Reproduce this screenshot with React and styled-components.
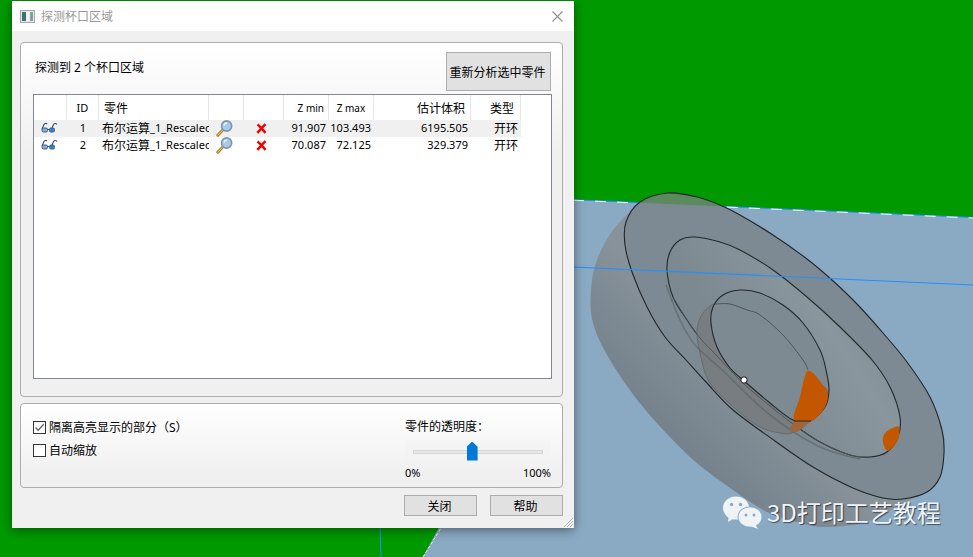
import React from "react";
import styled, { createGlobalStyle } from "styled-components";

const uiFont = `"Noto Sans", "Noto Sans CJK SC", sans-serif`;

const GlobalStyle = createGlobalStyle`
  html, body {
    margin: 0;
    padding: 0;
    overflow: hidden;
    background: #009900;
  }
`;

const Desktop = styled.div`
  position: relative;
  width: 973px;
  height: 557px;
  overflow: hidden;
  background: #009900;
  font-family: ${uiFont};
  font-size: 12px;
  color: #000;
`;

const Scene = styled.svg`
  position: absolute;
  inset: 0;
`;

const Dialog = styled.div`
  position: absolute;
  left: 12px;
  top: 1px;
  width: 562px;
  height: 527px;
  display: flex;
  flex-direction: column;
  background: #f0f0f0;
  box-shadow: 0 2px 10px rgba(0, 0, 0, 0.45);
`;

const TitleBar = styled.div`
  height: 30px;
  flex: none;
  display: flex;
  align-items: center;
  gap: 6px;
  padding: 0 11px 0 8px;
  background: #fff;
`;

const TitleText = styled.span`
  flex: 1;
  color: #999;
  font-size: 12px;
`;

const Body = styled.div`
  flex: 1;
  display: flex;
  flex-direction: column;
  padding: 11px 11px 12px 8px;
`;

const Group = styled.section`
  box-sizing: border-box;
  height: ${(p) => p.$height}px;
  flex: none;
  border: 1px solid #adadad;
  border-radius: 4px;
  background: linear-gradient(#fff, #f0f0f0 ${(p) => p.$fade}px);
`;

const DetectGroup = styled(Group)`
  display: flex;
  flex-direction: column;
  padding: 9px 11px 17px 12px;
`;

const OptionsGroup = styled(Group)`
  margin-top: 6px;
  display: flex;
  justify-content: space-between;
  padding: 14px 11px 0 12px;
`;

const TopRow = styled.div`
  display: flex;
  justify-content: space-between;
  align-items: flex-start;
  margin-bottom: 3px;
`;

const CountText = styled.span`
  margin: 7px 0 0 2px;
  line-height: 18px;
`;

const Button = styled.button`
  box-sizing: border-box;
  width: ${(p) => p.$width}px;
  height: ${(p) => p.$height}px;
  padding: 0 ${(p) => p.$nudge || 0}px 0 0;
  border: 1px solid #adadad;
  background: #e1e1e1;
  font-family: ${uiFont};
  font-size: 12px;
  color: #000;
`;

const Table = styled.div`
  flex: 1;
  box-sizing: border-box;
  margin-right: -1px;
  border: 1px solid #828790;
  background: #fff;
`;

const Row = styled.div`
  display: grid;
  grid-template-columns: 33px 32px 110px 35px 40px 45px 45px 97px 50px;
  width: 487px;
  height: ${(p) => p.$height}px;
  background: ${(p) => (p.$shaded ? "#f0f0f0" : "#fff")};
`;

const HeadCell = styled.div`
  display: flex;
  align-items: center;
  justify-content: ${(p) => p.$justify || "center"};
  padding: ${(p) => p.$padding || "0"};
  border-right: 1px solid #e5e5e5;
  font-size: ${(p) => p.$size || 12}px;
`;

const Cell = styled.div`
  display: flex;
  align-items: center;
  justify-content: ${(p) => p.$justify || "center"};
  padding: ${(p) => p.$padding || "0"};
  overflow: hidden;
  white-space: nowrap;
  font-size: ${(p) => (p.$small ? "11px" : "12px")};
`;

const GlassesCell = styled(Cell)`
  padding: 0 3px 2px 0;
`;

const LatinPart = styled.span`
  font-size: 11px;
`;

const CheckList = styled.div`
  display: flex;
  flex-direction: column;
  gap: 5px;
`;

const CheckRow = styled.label`
  display: flex;
  align-items: center;
  gap: 3px;
  height: 18px;
`;

const Box = styled.span`
  box-sizing: border-box;
  width: 13px;
  height: 13px;
  border: 1px solid #333;
  background: #fff;
  display: flex;
  align-items: center;
  justify-content: center;
`;

const SliderPanel = styled.div`
  width: 146px;
  display: flex;
  flex-direction: column;
  margin-top: -1px;
`;

const SliderArea = styled.div`
  height: 23px;
  margin-top: 5px;
  display: flex;
  align-items: center;
  padding: 0 8px;
  background: rgba(240, 240, 240, 0.35);
`;

const Track = styled.div`
  position: relative;
  flex: 1;
  box-sizing: border-box;
  height: 4px;
  border: 1px solid #d6d6d6;
  background: #e7e7e7;
`;

const Thumb = styled.div`
  position: absolute;
  top: -9px;
  width: 11px;
  height: 19px;
  margin-left: -5px;
  background: #0078d7;
  clip-path: polygon(50% 0, 100% 27%, 100% 100%, 0 100%, 0 27%);
`;

const PercentRow = styled.div`
  display: flex;
  justify-content: space-between;
  margin-top: 2px;
  font-size: 11px;
`;

const Footer = styled.div`
  margin-top: 7px;
  display: flex;
  justify-content: flex-end;
  gap: 13px;
`;

const Grip = styled.svg`
  position: absolute;
  right: 0;
  bottom: 0;
`;

const Watermark = styled.div`
  position: absolute;
  left: 722px;
  top: 495px;
  display: flex;
  align-items: center;
  gap: 4px;
  color: #f0f4f8;
  font-family: "Noto Sans CJK SC", "Noto Sans", sans-serif;
  font-size: 24px;
  line-height: 34px;
  text-shadow: 1px 1px 1px rgba(0, 0, 0, 0.55);
`;

// catmull-rom through the traced points, closed or open
const smooth = (pts, closed = true) => {
  const n = pts.length;
  const at = (i) => (closed ? pts[(i + n) % n] : pts[Math.max(0, Math.min(n - 1, i))]);
  let d = `M${pts[0][0]} ${pts[0][1]}`;
  const last = closed ? n : n - 1;
  for (let i = 0; i < last; i++) {
    const [p0, p1, p2, p3] = [at(i - 1), at(i), at(i + 1), at(i + 2)];
    const c1 = [p1[0] + (p2[0] - p0[0]) / 6, p1[1] + (p2[1] - p0[1]) / 6];
    const c2 = [p2[0] - (p3[0] - p1[0]) / 6, p2[1] - (p3[1] - p1[1]) / 6];
    d += `C${c1[0]} ${c1[1]} ${c2[0]} ${c2[1]} ${p2[0]} ${p2[1]}`;
  }
  return closed ? d + "Z" : d;
};

const underside = [[640,202],[613,230],[597,260],[591,290],[593,323],[610,360],[643,407],[690,457],[733,490],[767,512],[800,523],[827,527],[867,522],[900,505],[927,492]];
const rim = [[668,193],[640,202],[626,222],[625,245],[632,272],[647,307],[665,337],[686,360],[706,382],[733,410],[775,441],[813,467],[853,488],[883,498],[903,499],[927,492],[940,477],[944,453],[942,430],[930,397],[907,362],[883,333],[857,304],[832,280],[807,259],[773,235],[740,215],[720,205],[697,197]];
const middle = [[695,237],[680,240],[670,252],[667,270],[673,297],[687,320],[700,338],[717,356],[743,383],[770,406],[793,424],[820,442],[850,455],[870,457],[887,452],[898,437],[900,417],[890,387],[872,360],[840,327],[807,297],[773,270],[740,250],[720,242]];
const middleFront = [[673,297],[687,320],[700,338],[717,356],[743,383],[770,406],[793,424],[820,442],[850,455],[870,457]];
const middleEcho = [[666,285],[680,320],[695,345],[720,368],[770,415],[820,447],[860,459]];
const inner = [[740,290],[723,295],[713,307],[711,323],[717,347],[730,368],[743,380],[770,403],[793,420],[810,421],[825,407],[829,390],[826,370],[820,350],[803,323],[783,305],[760,293]];
const hollow = [[715,304],[703,313],[697,330],[700,353],[710,383],[737,410],[760,427],[780,433],[792,433],[805,425],[793,420],[770,403],[743,380],[730,368],[717,347],[711,323]];
const lip = [[715,304],[730,304],[747,310],[760,315],[783,335],[803,360],[808,370]];
const spotLarge = [[808,371],[823,385],[828,393],[825,407],[812,421],[794,420],[800,397]];
const spotSmall = [[895,427],[899,428],[898,440],[888,451],[883,442],[885,433]];

const CupScene = () => (
  <Scene width="973" height="557" viewBox="0 0 973 557">
    <defs>
      <linearGradient id="dish" gradientUnits="userSpaceOnUse" x1="640" y1="450" x2="730" y2="360">
        <stop offset="0" stopColor="#6f7c87" />
        <stop offset="1" stopColor="#87929a" />
      </linearGradient>
      <linearGradient id="seat" gradientUnits="userSpaceOnUse" x1="740" y1="360" x2="880" y2="270">
        <stop offset="0" stopColor="#7c8991" />
        <stop offset="0.55" stopColor="#8a969d" />
        <stop offset="1" stopColor="#7d8a92" />
      </linearGradient>
      <clipPath id="aboveEdge">
        <polygon points="573,0 973,0 973,217.5 573,199.7" />
      </clipPath>
    </defs>
    <polygon points="573,199.7 973,217.5 973,557 423,557 573,280" fill="#8aaac4" />
    <line x1="573" y1="199.7" x2="973" y2="217.5" stroke="#1e90ff" strokeWidth="1" />
    <line x1="573" y1="200.2" x2="973" y2="218" stroke="#fff" strokeWidth="1" strokeDasharray="11 11" />
    <line x1="423" y1="557" x2="441" y2="528" stroke="#fff" strokeWidth="1" strokeDasharray="3 2" />
    <line x1="380" y1="528" x2="381" y2="557" stroke="#1e90ff" strokeWidth="1" />
    <path d={smooth(underside, false) + "Z"} fill="url(#dish)" />
    <path d={smooth(rim)} fill="#7d8a93" />
    <path d={smooth(rim)} fill="#5b8a5f" clipPath="url(#aboveEdge)" />
    <path d={smooth(rim)} fill="none" stroke="#20262a" strokeWidth="1.1" />
    <path d={smooth(middle)} fill="url(#seat)" stroke="#23292d" strokeWidth="1.1" />
    <path d={smooth(hollow)} fill="#777d81" stroke="#666c70" strokeWidth="1" />
    <path d={smooth(inner)} fill="#7d8a92" stroke="#23292d" strokeWidth="1.1" />
    <path d={smooth(lip, false)} fill="none" stroke="#4b5357" strokeWidth="1" />
    <path d={smooth(middleFront, false)} fill="none" stroke="#4f575c" strokeWidth="1" />
    <path d={smooth(middleEcho, false)} fill="none" stroke="#5e666c" strokeWidth="1.6" strokeOpacity="0.7" />
    <path d={smooth(spotLarge)} fill="#c25700" />
    <polygon points="794,421 811,421 803,428 795,433 790,430" fill="#a0653a" />
    <line x1="794" y1="421" x2="811" y2="421" stroke="#23292d" strokeWidth="1" />
    <path d={smooth(spotSmall)} fill="#c25700" />
    <line x1="573" y1="267" x2="973" y2="285" stroke="#1e90ff" strokeWidth="1.1" />
    <circle cx="744" cy="380" r="3.2" fill="#fff" stroke="#111" strokeWidth="1" />
  </Scene>
);

const WindowIcon = () => (
  <svg width="15" height="13" viewBox="0 0 15 13">
    <rect x="0.5" y="0.5" width="14" height="12" fill="#e4e8e8" stroke="#a8a8a8" />
    <rect x="2" y="2" width="4" height="9" fill="#3f6f6f" />
    <rect x="6" y="2" width="4" height="9" fill="#eef2f2" />
    <rect x="10" y="2" width="3" height="5" fill="#6fae8f" />
    <rect x="10" y="7" width="3" height="4" fill="#8a98a8" />
  </svg>
);

const CloseIcon = () => (
  <svg width="11" height="11" viewBox="0 0 11 11">
    <path d="M0.5 0.5L10.5 10.5M10.5 0.5L0.5 10.5" stroke="#8f8f8f" strokeWidth="1.1" fill="none" />
  </svg>
);

const GlassesIcon = () => (
  <svg width="17" height="11" viewBox="0 0 17 11">
    <path d="M1 7L3 2.5C3.5 1.4 5 1 6 2M11 6L12.5 2.5C13 1.2 15 1 16 2.4" stroke="#3b4a5c" strokeWidth="1.1" fill="none" />
    <rect x="1" y="6" width="5.5" height="4" rx="1.5" fill="#7fb0e0" stroke="#35506e" strokeWidth="0.9" />
    <rect x="8.5" y="6" width="5" height="4" rx="1.5" fill="#2f86e0" stroke="#35506e" strokeWidth="0.9" />
    <path d="M6.5 7.5L8.5 7.5" stroke="#35506e" strokeWidth="1" />
  </svg>
);

const LensIcon = () => (
  <svg width="17" height="17" viewBox="0 0 17 17">
    <path d="M1.8 15.2L7 9.8" stroke="#b08030" strokeWidth="3" strokeLinecap="round" />
    <path d="M1.8 15.2L7 9.8" stroke="#ecca85" strokeWidth="1" strokeLinecap="round" />
    <circle cx="10.6" cy="6" r="5.1" fill="#a9c9e8" stroke="#7f95ad" strokeWidth="1.6" />
    <path d="M7.8 5.6C8.2 4 9.4 3.2 11 3.2" stroke="#eef6fc" strokeWidth="1.2" fill="none" />
  </svg>
);

const RemoveIcon = () => (
  <svg width="11" height="11" viewBox="0 0 11 11">
    <path d="M1.5 1.5C4 3.5 7 7 9.5 9.8M9.5 1.2C7 3.5 4 7 1.3 9.8" stroke="#ee0000" strokeWidth="2.5" fill="none" />
  </svg>
);

const CheckMark = () => (
  <svg width="11" height="11" viewBox="0 0 11 11">
    <path d="M1.5 5.5L4.2 8.3L9.7 2.2" stroke="#666" strokeWidth="1.3" fill="none" />
  </svg>
);

const WeChatIcon = () => (
  <svg width="41" height="34" viewBox="0 0 41 34">
    <ellipse cx="14" cy="13" rx="13" ry="11.5" fill="#eff3f6" />
    <path d="M7 20L6 27L14 22Z" fill="#eff3f6" />
    <circle cx="9.5" cy="9.5" r="1.7" fill="#8aaac4" />
    <circle cx="18.5" cy="9.5" r="1.7" fill="#8aaac4" />
    <ellipse cx="28" cy="22" rx="12.5" ry="10.5" fill="#8aaac4" />
    <ellipse cx="28" cy="22" rx="11.5" ry="9.8" fill="#eff3f6" />
    <path d="M33 29L36 34L28 31Z" fill="#eff3f6" />
    <circle cx="24" cy="20" r="1.5" fill="#8aaac4" />
    <circle cx="32" cy="20" r="1.5" fill="#8aaac4" />
  </svg>
);

const rows = [
  { id: 1, zmin: "91.907", zmax: "103.493", volume: "6195.505" },
  { id: 2, zmin: "70.087", zmax: "72.125", volume: "329.379" },
];

const App = () => (
  <Desktop>
    <GlobalStyle />
    <CupScene />
    <Dialog>
      <TitleBar>
        <WindowIcon />
        <TitleText>探测杯口区域</TitleText>
        <CloseIcon />
      </TitleBar>
      <Body>
        <DetectGroup $height={355} $fade={110}>
          <TopRow>
            <CountText>探测到 2 个杯口区域</CountText>
            <Button $width={105} $height={39} $nudge={2}>重新分析选中零件</Button>
          </TopRow>
          <Table>
            <Row $height={25}>
              <HeadCell />
              <HeadCell $size={11}>ID</HeadCell>
              <HeadCell $justify="flex-start" $padding="0 0 0 5px">零件</HeadCell>
              <HeadCell />
              <HeadCell />
              <HeadCell $size={10} $justify="flex-end" $padding="0 4px 0 0">Z min</HeadCell>
              <HeadCell $size={10}>Z max</HeadCell>
              <HeadCell $justify="flex-end" $padding="0 5px 0 0">估计体积</HeadCell>
              <HeadCell $justify="flex-end" $padding="0 6px 0 0">类型</HeadCell>
            </Row>
            {rows.map((row, i) => (
              <Row key={row.id} $height={17} $shaded={i === 0}>
                <GlassesCell><GlassesIcon /></GlassesCell>
                <Cell $small $padding="0 0 2px 0">{row.id}</Cell>
                <Cell $justify="flex-start" $padding="0 0 2px 3px">布尔运算<LatinPart>_1_Rescaled</LatinPart></Cell>
                <Cell $justify="flex-start" $padding="0 0 0 7px"><LensIcon /></Cell>
                <Cell $justify="flex-start" $padding="0 0 0 12px"><RemoveIcon /></Cell>
                <Cell $small $justify="flex-end" $padding="0 3px 2px 0">{row.zmin}</Cell>
                <Cell $small $justify="flex-end" $padding="0 3px 2px 0">{row.zmax}</Cell>
                <Cell $small $justify="flex-end" $padding="0 3px 2px 0">{row.volume}</Cell>
                <Cell $justify="flex-end" $padding="0 3px 2px 0">开环</Cell>
              </Row>
            ))}
          </Table>
        </DetectGroup>
        <OptionsGroup $height={85} $fade={70}>
          <CheckList>
            <CheckRow>
              <Box><CheckMark /></Box>
              隔离高亮显示的部分（S）
            </CheckRow>
            <CheckRow>
              <Box />
              自动缩放
            </CheckRow>
          </CheckList>
          <SliderPanel>
            <span>零件的透明度：</span>
            <SliderArea>
              <Track>
                <Thumb style={{ left: "45%" }} />
              </Track>
            </SliderArea>
            <PercentRow>
              <span>0%</span>
              <span>100%</span>
            </PercentRow>
          </SliderPanel>
        </OptionsGroup>
        <Footer>
          <Button $width={73} $height={21} $nudge={2}>关闭</Button>
          <Button $width={73} $height={21} $nudge={2}>帮助</Button>
        </Footer>
      </Body>
      <Grip width="12" height="12" viewBox="0 0 12 12">
        <path d="M11 2L2 11M11 5L5 11M11 8L8 11" stroke="#b5b5b5" strokeWidth="1" fill="none" />
      </Grip>
    </Dialog>
    <Watermark>
      <WeChatIcon />
      <span>3D打印工艺教程</span>
    </Watermark>
  </Desktop>
);

export default App;
